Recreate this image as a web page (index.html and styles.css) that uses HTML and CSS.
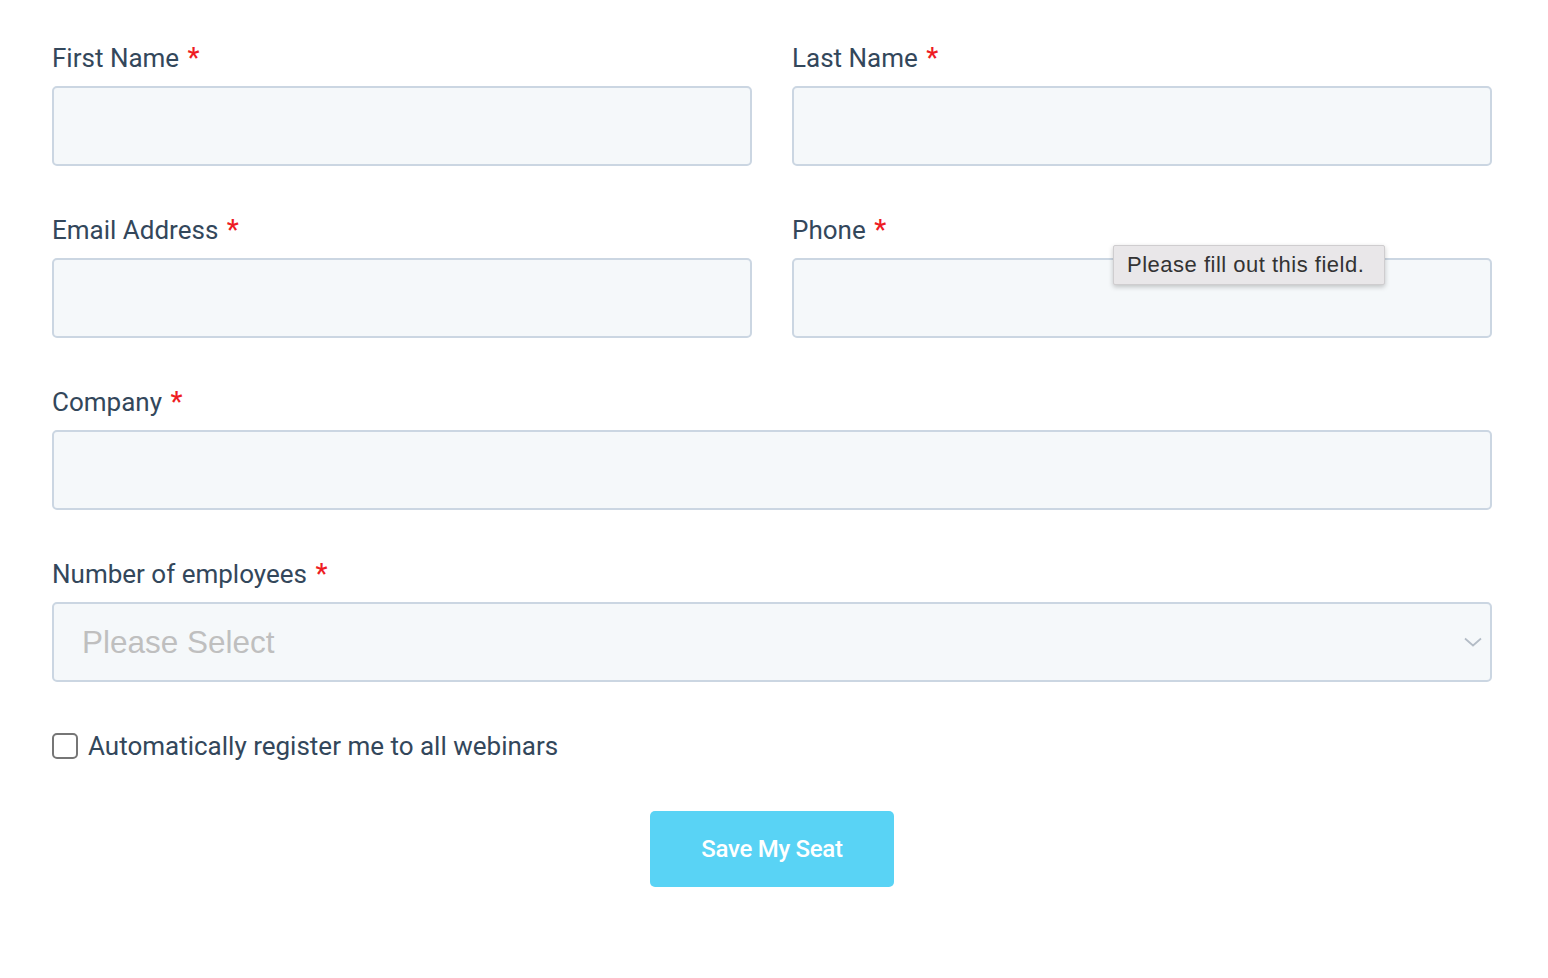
FILE: index.html
```html
<!DOCTYPE html>
<html>
<head>
<meta charset="utf-8">
<link rel="stylesheet" href="styles.css">
</head>
<body>
<form class="form">
  <div class="row two">
    <div class="field">
      <label class="label">First Name <span class="req">*</span></label>
      <div class="input"></div>
    </div>
    <div class="field">
      <label class="label">Last Name <span class="req">*</span></label>
      <div class="input"></div>
    </div>
  </div>
  <div class="row two">
    <div class="field">
      <label class="label">Email Address <span class="req">*</span></label>
      <div class="input"></div>
    </div>
    <div class="field">
      <label class="label">Phone <span class="req">*</span></label>
      <div class="input has-tip">
        <div class="tooltip">Please fill out this field.</div>
      </div>
    </div>
  </div>
  <div class="row">
    <div class="field">
      <label class="label">Company <span class="req">*</span></label>
      <div class="input"></div>
    </div>
  </div>
  <div class="row">
    <div class="field">
      <label class="label">Number of employees <span class="req">*</span></label>
      <div class="input select">
        <span class="placeholder">Please Select</span>
        <svg class="chev" width="18" height="10" viewBox="0 0 18 10"><path d="M1 1.5 L9 8.5 L17 1.5" fill="none" stroke="#b3bcc6" stroke-width="1.7"/></svg>
      </div>
    </div>
  </div>
  <div class="check-row">
    <span class="checkbox"></span>
    <span class="check-label">Automatically register me to all webinars</span>
  </div>
  <div class="actions">
    <button type="button" class="btn">Save My Seat</button>
  </div>
</form>
</body>
</html>
```
FILE: styles.css
```css
html, body {
  margin: 0;
  padding: 0;
  background: #ffffff;
}
body {
  font-family: Roboto, "Liberation Sans", sans-serif;
  color: #33475b;
}
.form {
  width: 1440px;
  padding: 40px 0 0 52px;
  display: flex;
  flex-direction: column;
}
.row {
  display: grid;
  grid-template-columns: 1fr;
  margin-bottom: 46px;
}
.row.two {
  grid-template-columns: 1fr 1fr;
  column-gap: 40px;
}
.field {
  display: flex;
  flex-direction: column;
}
.label {
  display: block;
  font-size: 26px;
  line-height: 36px;
  height: 36px;
  margin-bottom: 10px;
  color: #33475b;
}
.req {
  color: #ee1c24;
  font-size: 27px;
  font-weight: 500;
  margin-left: 2px;
}
.input {
  box-sizing: border-box;
  height: 80px;
  border: 2px solid #cbd6e2;
  border-radius: 5px;
  background: #f5f8fa;
  position: relative;
}
.select {
  display: flex;
  align-items: center;
  justify-content: space-between;
  padding: 0 8px 0 28px;
}
.placeholder {
  font-family: "Liberation Sans", Arial, sans-serif;
  font-size: 31.5px;
  color: #bfbfbf;
}
.chev {
  display: block;
}
.tooltip {
  position: absolute;
  left: 319px;
  top: -15px;
  box-sizing: border-box;
  width: 272px;
  height: 40px;
  background: #e9e7e9;
  border: 1px solid #cfcdcf;
  border-radius: 2px;
  box-shadow: 0 2px 5px rgba(0, 0, 0, 0.22);
  font-family: "Liberation Sans", Arial, sans-serif;
  font-size: 22px;
  line-height: 38px;
  color: #333333;
  padding-left: 13px;
  letter-spacing: 0.5px;
  white-space: nowrap;
}
.check-row {
  display: flex;
  align-items: center;
  height: 36px;
}
.checkbox {
  box-sizing: border-box;
  width: 26px;
  height: 26px;
  border: 2px solid #767676;
  border-radius: 5px;
  background: #fff;
  margin-right: 10px;
}
.check-label {
  font-size: 26px;
  color: #33475b;
}
.actions {
  display: flex;
  justify-content: center;
  width: 1440px;
  margin-top: 47px;
}
.btn {
  width: 244px;
  height: 76px;
  border: none;
  border-radius: 5px;
  background: #59d3f5;
  color: #ffffff;
  font-family: Roboto, "Liberation Sans", sans-serif;
  font-weight: 500;
  font-size: 24px;
  letter-spacing: -0.3px;
  padding: 0;
}
```
